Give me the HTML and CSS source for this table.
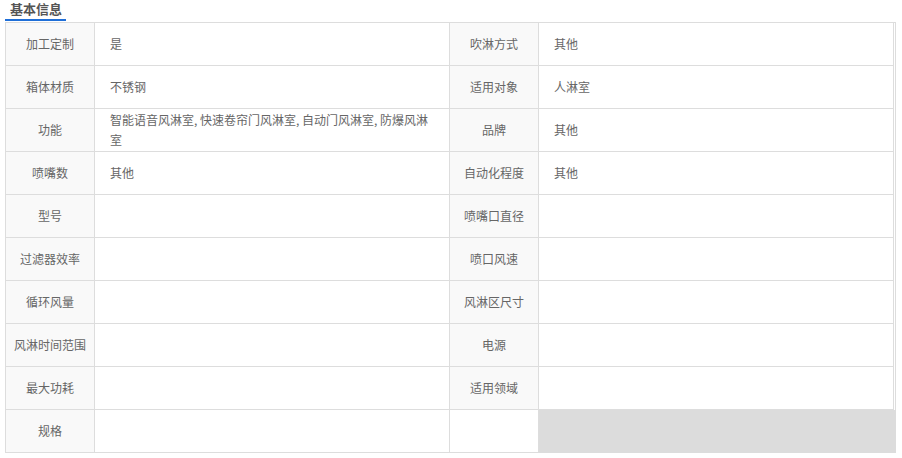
FILE: index.html
```html
<!DOCTYPE html>
<html lang="zh">
<head>
<meta charset="utf-8">
<title>基本信息</title>
<link rel="stylesheet" href="styles.css">
</head>
<body>
<div class="wrap">
  <div class="title"><span class="title-text">基本信息</span></div>
  <table class="info">
    <colgroup>
      <col class="c-label"><col class="c-value"><col class="c-label"><col class="c-value2">
    </colgroup>
    <tbody>
      <tr><td class="label">加工定制</td><td class="value">是</td><td class="label">吹淋方式</td><td class="value last">其他</td></tr>
      <tr><td class="label">箱体材质</td><td class="value">不锈钢</td><td class="label">适用对象</td><td class="value last">人淋室</td></tr>
      <tr><td class="label">功能</td><td class="value">智能语音风淋室, 快速卷帘门风淋室, 自动门风淋室, 防爆风淋室</td><td class="label">品牌</td><td class="value last">其他</td></tr>
      <tr><td class="label">喷嘴数</td><td class="value">其他</td><td class="label">自动化程度</td><td class="value last">其他</td></tr>
      <tr><td class="label">型号</td><td class="value"></td><td class="label">喷嘴口直径</td><td class="value last"></td></tr>
      <tr><td class="label">过滤器效率</td><td class="value"></td><td class="label">喷口风速</td><td class="value last"></td></tr>
      <tr><td class="label">循环风量</td><td class="value"></td><td class="label">风淋区尺寸</td><td class="value last"></td></tr>
      <tr><td class="label">风淋时间范围</td><td class="value"></td><td class="label">电源</td><td class="value last"></td></tr>
      <tr><td class="label">最大功耗</td><td class="value"></td><td class="label">适用领域</td><td class="value last"></td></tr>
      <tr><td class="label">规格</td><td class="value"></td><td class="value"></td></tr>
    </tbody>
  </table>
</div>
</body>
</html>
```
FILE: styles.css
```css
html, body {
  margin: 0;
  padding: 0;
  background: #fff;
}
body {
  font-family: "Noto Sans CJK SC", "Noto Sans", sans-serif;
  color: #666;
  font-size: 12px;
}
.wrap {
  padding-left: 5px;
}
.title {
  height: 21px;
}
.title-text {
  display: inline-block;
  box-sizing: border-box;
  width: 61px;
  height: 21px;
  padding-left: 5px;
  font-size: 13px;
  font-weight: bold;
  line-height: 18px;
  color: #555;
  border-bottom: 2px solid #1f6fd8;
}
.info {
  margin-top: 1px;
  width: 889px;
  border-collapse: collapse;
  table-layout: fixed;
  background: #dcdcdc;
}
.c-label { width: 89px; }
.c-value { width: 355px; }
.c-value2 { width: 356px; }
.info td {
  border: 1px solid #dddddd;
  height: 43px;
  box-sizing: border-box;
  padding: 0 15px;
  line-height: 20px;
  vertical-align: middle;
  background: #fff;
  font-size: 12px;
}
.info td.label {
  background: #f9f9f9;
  text-align: center;
  padding: 0 4px;
}
.info td.last {
  border-right: 3px double #dddddd;
}
```
